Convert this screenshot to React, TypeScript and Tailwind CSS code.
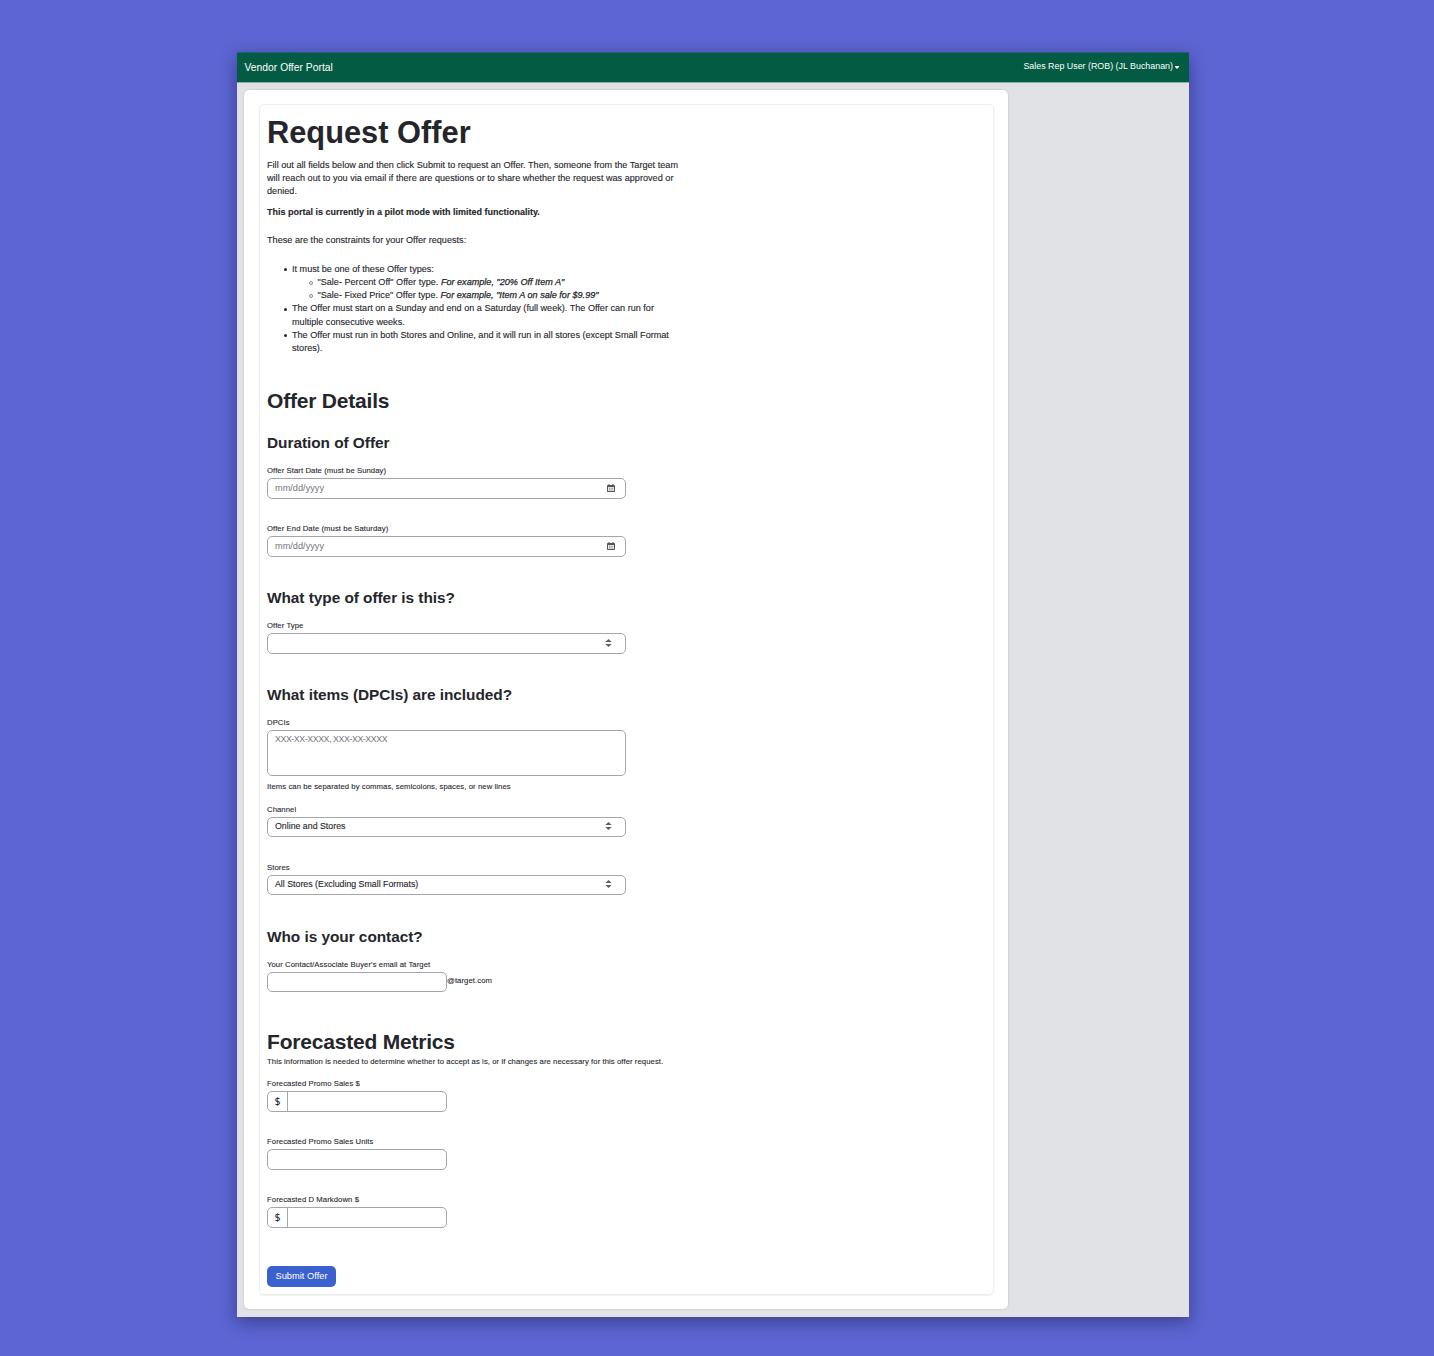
import React from "react";

const labelText = "text-[7.7px] leading-[12px] tracking-[0.08px] whitespace-nowrap [-webkit-text-stroke:0.1px]";
const control = "h-[20.5px] rounded-[5px] border border-[#a5a5ac] bg-white";

function CalendarIcon() {
  return (
    <svg width="8" height="8" viewBox="0 0 8 8" className="mb-px block">
      <path d="M1.5 0h1v1h3V0h1v1h.7a.8.8 0 0 1 .8.8V7.2a.8.8 0 0 1-.8.8H.8A.8.8 0 0 1 0 7.2V1.8A.8.8 0 0 1 .8 1h.7z" fill="#55555a" />
      <path d="M1 3h6v4H1z" fill="#ededee" />
      <path d="M2 3.700h1v1H2zM3.600 3.700h1v1h-1zM5.200 3.700h1v1h-1zM2 5.400h1v1H2zM3.600 5.400h1v1h-1zM5.200 5.400h1v1h-1z" fill="#85858a" />
    </svg>
  );
}

function SortIcon() {
  return (
    <svg width="7" height="8" viewBox="0 0 7 8" className="mb-px block">
      <path d="M3.5 0 6.7 3.1H.3zM3.5 8 .3 4.9h6.4z" fill="#5c5e68" />
    </svg>
  );
}

function Field({ label, children }: { label: string; children: React.ReactNode }) {
  return (
    <div className="flex h-[58px] flex-col">
      <div className={`h-[13px] pt-px ${labelText}`}>{label}</div>
      {children}
    </div>
  );
}

function DateField({ label }: { label: string }) {
  return (
    <Field label={label}>
      <div className={`mt-px flex w-[359px] items-center justify-between pr-[10px] pl-[7px] ${control}`}>
        <span className="pt-px text-[9.2px] leading-[13px] text-[#74757e]">mm/dd/yyyy</span>
        <CalendarIcon />
      </div>
    </Field>
  );
}

function SelectField({ label, value }: { label: string; value?: string }) {
  return (
    <Field label={label}>
      <div className={`mt-px flex w-[359px] items-center justify-between pr-[13px] pl-[7px] ${control}`}>
        <span className="text-[8.8px] leading-[13px] [-webkit-text-stroke:0.12px]">{value}</span>
        <SortIcon />
      </div>
    </Field>
  );
}

function InputField({ label, dollar, suffix }: { label: string; dollar?: boolean; suffix?: string }) {
  return (
    <Field label={label}>
      <div className="mt-px flex items-center">
        <div className={`flex w-[180px] ${control}`}>
          {dollar && (
            <span className="flex w-5 items-center justify-center border-r border-[#a5a5ac] font-['Noto_Sans',sans-serif] text-[10.5px] leading-none">
              $
            </span>
          )}
        </div>
        {suffix && <span className={`pb-[2px] ${labelText}`}>{suffix}</span>}
      </div>
    </Field>
  );
}

function Title({ children }: { children: React.ReactNode }) {
  return <h2 className="h-[28px] text-[21px] leading-[28px] font-bold tracking-[-0.2px] whitespace-nowrap">{children}</h2>;
}

function Subtitle({ children }: { children: React.ReactNode }) {
  return <h3 className="h-[39px] text-[15.4px] leading-[22px] font-bold tracking-[-0.04px] whitespace-nowrap">{children}</h3>;
}

function Bullet({ children }: { children: React.ReactNode }) {
  return (
    <li className="flex">
      <span className="mt-[5.5px] mr-[5px] -ml-[8px] h-[3px] w-[3px] shrink-0 rounded-full bg-[#25262b]" />
      <div>{children}</div>
    </li>
  );
}

function SubBullet({ children }: { children: React.ReactNode }) {
  return (
    <li className="flex items-center">
      <span className="mr-[5px] -ml-[9px] h-[4px] w-[4px] rounded-full border-[0.5px] border-[#88898e]" />
      <span>{children}</span>
    </li>
  );
}

export default function App() {
  return (
    <div className="h-[1356px] w-[1434px] overflow-hidden bg-[#5c65d3] pt-[52px] pl-[237px] font-['Liberation_Sans',sans-serif] text-[#25262b]">
      <div className="h-[1265px] w-[952px] bg-[#e1e2e6] shadow-[0_5px_16px_rgba(20,20,60,0.48)]">
        <header className="flex h-[31px] items-center justify-between border-t border-b border-t-[#2a6078] border-b-[#82b3a3] bg-[#025b42] pr-[10px] pl-[7.5px] text-white">
          <span className="text-[10.3px] leading-[14px] tracking-[0.02px]">Vendor Offer Portal</span>
          <span className="flex items-center gap-[2px] pb-[2px] text-[8.9px] leading-[13px]">
            Sales Rep User (ROB) (JL Buchanan)
            <svg width="4" height="3" viewBox="0 0 4 3" className="mt-[2px]">
              <path d="M0 0h4v1L2 3 0 1z" fill="#fff" />
            </svg>
          </span>
        </header>
        <main className="mt-[7px] ml-[7px] h-[1219px] w-[764px] rounded-[5px] bg-white px-[15px] py-[14px] shadow-[0_0_2px_rgba(0,0,0,0.22)]">
          <section className="h-[1191px] w-[735px] rounded-[5px] border border-[#ededef] pt-[8px] pl-[7px] shadow-[0_1px_1px_rgba(0,0,0,0.06)]">
            <h1 className="h-[45px] pt-px text-[30.8px] leading-[38px] font-bold whitespace-nowrap">Request Offer</h1>
            <div className="h-[229px] pt-[0.7px] text-[9.1px] leading-[13.25px] tracking-[0.015px] whitespace-nowrap [-webkit-text-stroke:0.12px]">
              <p>
                Fill out all fields below and then click Submit to request an Offer. Then, someone from the Target team
                <br />
                will reach out to you via email if there are questions or to share whether the request was approved or
                <br />
                denied.
              </p>
              <p className="mt-[7.5px] text-[9px] font-bold tracking-normal">This portal is currently in a pilot mode with limited functionality.</p>
              <p className="mt-[15px]">These are the constraints for your Offer requests:</p>
              <ul className="mt-[15.3px] pl-[25px] tracking-[0px]">
                <Bullet>
                  It must be one of these Offer types:
                  <ul className="pl-[25.5px]">
                    <SubBullet>
                      "Sale- Percent Off" Offer type. <em className="[-webkit-text-stroke:0.25px]">For example, "20% Off Item A"</em>
                    </SubBullet>
                    <SubBullet>
                      "Sale- Fixed Price" Offer type. <em className="[-webkit-text-stroke:0.25px]">For example, "Item A on sale for $9.99"</em>
                    </SubBullet>
                  </ul>
                </Bullet>
                <Bullet>
                  The Offer must start on a Sunday and end on a Saturday (full week). The Offer can run for
                  <br />
                  multiple consecutive weeks.
                </Bullet>
                <Bullet>
                  The Offer must run in both Stores and Online, and it will run in all stores (except Small Format
                  <br />
                  stores).
                </Bullet>
              </ul>
            </div>
            <Title>Offer Details</Title>
            <div className="mt-[17px]">
              <Subtitle>Duration of Offer</Subtitle>
              <div className="-mt-[7px]">
                <DateField label="Offer Start Date (must be Sunday)" />
                <DateField label="Offer End Date (must be Saturday)" />
              </div>
            </div>
            <div className="mt-[7px]">
              <Subtitle>What type of offer is this?</Subtitle>
              <div className="-mt-[7px]">
                <SelectField label="Offer Type" />
              </div>
            </div>
            <div className="mt-[7px]">
              <Subtitle>What items (DPCIs) are included?</Subtitle>
              <div className="-mt-[7px]">
                <div className="h-[86.5px]">
                  <div className={`h-[13px] pt-px ${labelText}`}>DPCIs</div>
                  <div className="mt-px h-[45.5px] w-[359px] rounded-[5px] border border-[#a5a5ac] pt-[1.5px] pl-[7px] text-[8.8px] leading-[13px] tracking-[-0.42px] text-[#74757e]">
                    XXX-XX-XXXX, XXX-XX-XXXX
                  </div>
                  <div className={`mt-[5.5px] ${labelText}`}>Items can be separated by commas, semicolons, spaces, or new lines</div>
                </div>
                <SelectField label="Channel" value="Online and Stores" />
                <SelectField label="Stores" value="All Stores (Excluding Small Formats)" />
              </div>
            </div>
            <div className="mt-[7px]">
              <Subtitle>Who is your contact?</Subtitle>
              <div className="-mt-[7px]">
                <InputField label="Your Contact/Associate Buyer's email at Target" suffix="@target.com" />
              </div>
            </div>
            <div className="mt-[12px]">
              <Title>Forecasted Metrics</Title>
              <p className={`h-[21.5px] ${labelText}`}>
                This information is needed to determine whether to accept as is, or if changes are necessary for this offer request.
              </p>
              <InputField label="Forecasted Promo Sales $" dollar />
              <InputField label="Forecasted Promo Sales Units" />
              <InputField label="Forecasted D Markdown $" dollar />
            </div>
            <button className="mt-[15px] flex h-[20.5px] w-[69px] items-center justify-center rounded-[5px] bg-[#3a61cd] pt-[2px] text-[9.3px] whitespace-nowrap text-white">
              Submit Offer
            </button>
          </section>
        </main>
      </div>
    </div>
  );
}
